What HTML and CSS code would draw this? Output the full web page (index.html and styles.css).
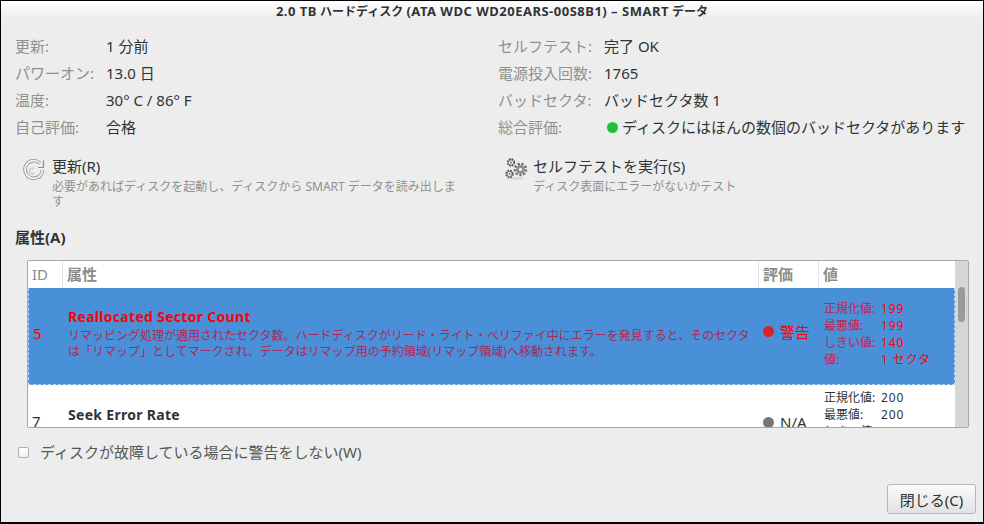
FILE: index.html
```html
<!DOCTYPE html>
<html lang="ja">
<head>
  <meta charset="UTF-8" />
  <title>SMART データ</title>
  <link rel="stylesheet" href="styles.css">
</head>
<body>
  <div class="dialog">
    <div class="titlebar"><span class="lat">2.0 TB</span> ハードディスク <span class="lat">(ATA WDC WD20EARS-00S8B1) – SMART</span> データ</div>

    <div class="info">
      <div class="info-col">
        <div class="info-row"><span class="label">更新:</span><span>1 分前</span></div>
        <div class="info-row"><span class="label">パワーオン:</span><span>13.0 日</span></div>
        <div class="info-row"><span class="label">温度:</span><span>30° C / 86° F</span></div>
        <div class="info-row"><span class="label">自己評価:</span><span>合格</span></div>
      </div>
      <div class="info-col right">
        <div class="info-row"><span class="label">セルフテスト:</span><span>完了 OK</span></div>
        <div class="info-row"><span class="label">電源投入回数:</span><span>1765</span></div>
        <div class="info-row"><span class="label">バッドセクタ:</span><span>バッドセクタ数 1</span></div>
        <div class="info-row"><span class="label">総合評価:</span><span class="status"><i class="dot green"></i>ディスクにはほんの数個のバッドセクタがあります</span></div>
      </div>
    </div>

    <div class="actions">
      <div class="action">
        <svg class="action-icon" viewBox="0 0 22 22" width="22" height="22">
          <ellipse cx="11" cy="20" rx="8" ry="1.5" fill="#cfcfcf"/>
          <path d="M17 5.2A8.8 8.8 0 1 0 19.6 12" fill="none" stroke="#8d8f8b" stroke-width="3.4"/>
          <path d="M17 5.2A8.8 8.8 0 1 0 19.6 12" fill="none" stroke="#f4f4f4" stroke-width="1.8"/>
          <path d="M15 9.5h5.5V2.5" fill="none" stroke="#8d8f8b" stroke-width="1.2"/>
          <path d="M11 10.5 A3 3 0 1 0 11 15.5" fill="none" stroke="#b5b6b3" stroke-width="1"/>
        </svg>
        <div class="action-text">
          <div class="action-title">更新(R)</div>
          <div class="action-desc">必要があればディスクを起動し、ディスクから SMART データを読み出します</div>
        </div>
      </div>
      <div class="action second">
        <svg class="action-icon" viewBox="0 0 22 22" width="22" height="22">
          <ellipse cx="11" cy="20.5" rx="9" ry="1.2" fill="#d4d4d4"/>
          <circle cx="15.5" cy="11.5" r="5.6" fill="none" stroke="#6a6c68" stroke-width="2.4" stroke-dasharray="2.2 1.6"/>
          <circle cx="15.5" cy="11.5" r="4.4" fill="#8b8d89"/>
          <circle cx="15.5" cy="11.5" r="1.7" fill="#ededed"/>
          <circle cx="6" cy="4.5" r="3.4" fill="none" stroke="#4c4e4a" stroke-width="1.6" stroke-dasharray="1.7 1"/>
          <circle cx="6" cy="4.5" r="2.6" fill="#f2f2f2" stroke="#4c4e4a" stroke-width="0.7"/>
          <circle cx="6" cy="4.5" r="0.9" fill="#666"/>
          <circle cx="4.5" cy="16" r="3.4" fill="none" stroke="#4c4e4a" stroke-width="1.6" stroke-dasharray="1.7 1"/>
          <circle cx="4.5" cy="16" r="2.6" fill="#f2f2f2" stroke="#4c4e4a" stroke-width="0.7"/>
          <circle cx="4.5" cy="16" r="0.9" fill="#666"/>
        </svg>
        <div class="action-text">
          <div class="action-title">セルフテストを実行(S)</div>
          <div class="action-desc">ディスク表面にエラーがないかテスト</div>
        </div>
      </div>
    </div>

    <div class="section-title">属性(A)</div>

    <div class="list">
      <div class="list-main">
        <div class="list-head row-grid">
          <div class="head-id">ID</div>
          <div>属性</div>
          <div>評価</div>
          <div>値</div>
        </div>
        <div class="row row-grid selected">
          <div class="cell-id">5</div>
          <div class="cell-attr">
            <div class="attr-name">Reallocated Sector Count</div>
            <div class="attr-desc">リマッピング処理が適用されたセクタ数。ハードディスクがリード・ライト・ベリファイ中にエラーを発見すると、そのセクタは「リマップ」としてマークされ、データはリマップ用の予約領域(リマップ領域)へ移動されます。</div>
          </div>
          <div class="cell-rating"><i class="dot red"></i>警告</div>
          <div class="values">
            <span class="vkey">正規化値:</span><span>199</span>
            <span class="vkey">最悪値:</span><span>199</span>
            <span class="vkey">しきい値:</span><span>140</span>
            <span class="vkey">値:</span><span>1 セクタ</span>
          </div>
        </div>
        <div class="row row-grid second-row">
          <div class="cell-id">7</div>
          <div class="cell-attr">
            <div class="attr-name">Seek Error Rate</div>
          </div>
          <div class="cell-rating"><i class="dot gray"></i>N/A</div>
          <div class="values">
            <span class="vkey">正規化値:</span><span>200</span>
            <span class="vkey">最悪値:</span><span>200</span>
            <span class="vkey">しきい値:</span><span>51</span>
            <span class="vkey">値:</span><span>0</span>
          </div>
        </div>
      </div>
      <div class="scrollbar"><div class="thumb"></div></div>
    </div>

    <label class="check"><span class="box"></span>ディスクが故障している場合に警告をしない(W)</label>

    <div class="footer"><button class="close">閉じる(C)</button></div>
  </div>
</body>
</html>
```

FILE: styles.css
```css
* {
  box-sizing: border-box;
}

html, body {
  margin: 0;
  height: 100%;
  overflow: hidden;
}

body {
  font-family: "Noto Sans", "Noto Sans CJK JP", sans-serif;
  font-size: 15px;
  color: #2e3436;
  background: #ededed;
}

.dialog {
  display: flex;
  flex-direction: column;
  height: 524px;
  border: 1px solid #000;
  border-bottom-width: 2px;
  background: #ededed;
}

.titlebar {
  height: 17px;
  line-height: 20px;
  flex: none;
  text-align: center;
  font-size: 12px;
  font-weight: bold;
  color: #2e3436;
  background: linear-gradient(to bottom, #fff, #ededed);
}

.lat {
  font-size: 13px;
  letter-spacing: 0.5px;
}

/* top info block */
.info {
  display: flex;
  margin-top: 15px;
  padding-left: 14px;
}

.info-col {
  width: 483px;
}

.info-row {
  display: flex;
  height: 27px;
  line-height: 27px;
  white-space: nowrap;
}

.label {
  width: 91px;
  flex: none;
  color: #8f918d;
}

.right .label {
  width: 106px;
}

.status {
  display: flex;
  align-items: center;
}

.dot {
  display: inline-block;
  flex: none;
  width: 11px;
  height: 11px;
  border-radius: 50%;
}

.green {
  margin: 0 4px 0 3px;
  background: #1fc13a;
}

.red {
  background: #d8232a;
  margin-right: 6px;
}

.gray {
  background: #777;
  margin-right: 6px;
}

/* action buttons */
.actions {
  display: flex;
  margin-top: 14px;
  padding-left: 22px;
}

.action {
  display: flex;
  width: 483px;
}

.action-icon {
  flex: none;
  margin: 3px 7px 0 0;
}

.action.second .action-icon {
  margin-right: 6px;
  margin-left: 2px;
}

.action-text {
  width: 409px;
}

.action-title {
  line-height: 22px;
}

.action-desc {
  margin-top: 2px;
  font-size: 12px;
  line-height: 15px;
  color: #8f918d;
}

.section-title {
  margin: 18px 0 0 14px;
  line-height: 20px;
  font-weight: bold;
  font-size: 15px;
}

/* attribute list */
.list {
  display: flex;
  height: 168px;
  margin: 13px 14px 0 26px;
  border: 1px solid #a8a8a8;
  border-radius: 2px;
  background: #fff;
  overflow: hidden;
}

.list-main {
  width: 927px;
  overflow: hidden;
}

.row-grid {
  display: grid;
  grid-template-columns: 34px 696px 60px 137px;
}

.list-head {
  height: 27px;
  line-height: 27px;
  font-weight: bold;
  font-size: 15px;
  color: #8b8d89;
}

.list-head > div {
  padding-left: 4px;
  border-left: 1px solid #e2e2e2;
}

.list-head > .head-id {
  border-left: 0;
  font-weight: normal;
}

.row {
  align-items: center;
  font-size: 12px;
}

.selected {
  height: 97px;
  padding-bottom: 4px;
  background: #4a90d9;
  border: 1px dashed #b9d6f3;
  border-top: 0;
  color: #ff0000;
  grid-template-columns: 33px 696px 60px 137px;
}

.second-row {
  height: 75px;
}

.cell-id {
  padding: 0 0 3px 4px;
  font-size: 15px;
}

.cell-attr {
  padding-left: 6px;
  padding-right: 2px;
}

.attr-name {
  margin-bottom: 2px;
  font-size: 14px;
  font-weight: bold;
  line-height: 18px;
  letter-spacing: 0.3px;
}

.attr-desc {
  line-height: 16px;
  color: #a82a58;
}

.second-row .attr-name {
  margin-bottom: 16px;
}

.cell-rating {
  display: flex;
  align-items: center;
  padding: 0 0 1px 5px;
  font-size: 15px;
}

.selected .cell-rating {
  padding-bottom: 5px;
}

.values {
  display: grid;
  grid-template-columns: 57px auto;
  padding-left: 6px;
  line-height: 17px;
  font-size: 12px;
  white-space: nowrap;
}

.values span:nth-child(even) {
  letter-spacing: 0.9px;
}

.selected .vkey {
  color: #c3244c;
}

.scrollbar {
  flex: 1;
  background: #d6d6d6;
}

.thumb {
  width: 7px;
  height: 35px;
  margin: 26px 0 0 3px;
  border-radius: 4px;
  background: #9a9a9a;
}

/* bottom */
.check {
  display: flex;
  align-items: center;
  margin: 14px 0 0 17px;
  line-height: 20px;
  color: #555753;
}

.box {
  width: 11px;
  height: 11px;
  margin-right: 11px;
  border: 1px solid #b0b0b0;
  border-radius: 2px;
  background: linear-gradient(to bottom, #fff, #f0f0f0);
}

.footer {
  display: flex;
  justify-content: flex-end;
  margin-top: auto;
  padding: 0 7px 8px 0;
}

.close {
  width: 89px;
  height: 30px;
  padding: 0;
  font: inherit;
  font-size: 15px;
  color: #2e3436;
  border: 1px solid #b6b6b3;
  border-radius: 3px;
  background: linear-gradient(to bottom, #fafafa, #e2e2e2);
}
```
